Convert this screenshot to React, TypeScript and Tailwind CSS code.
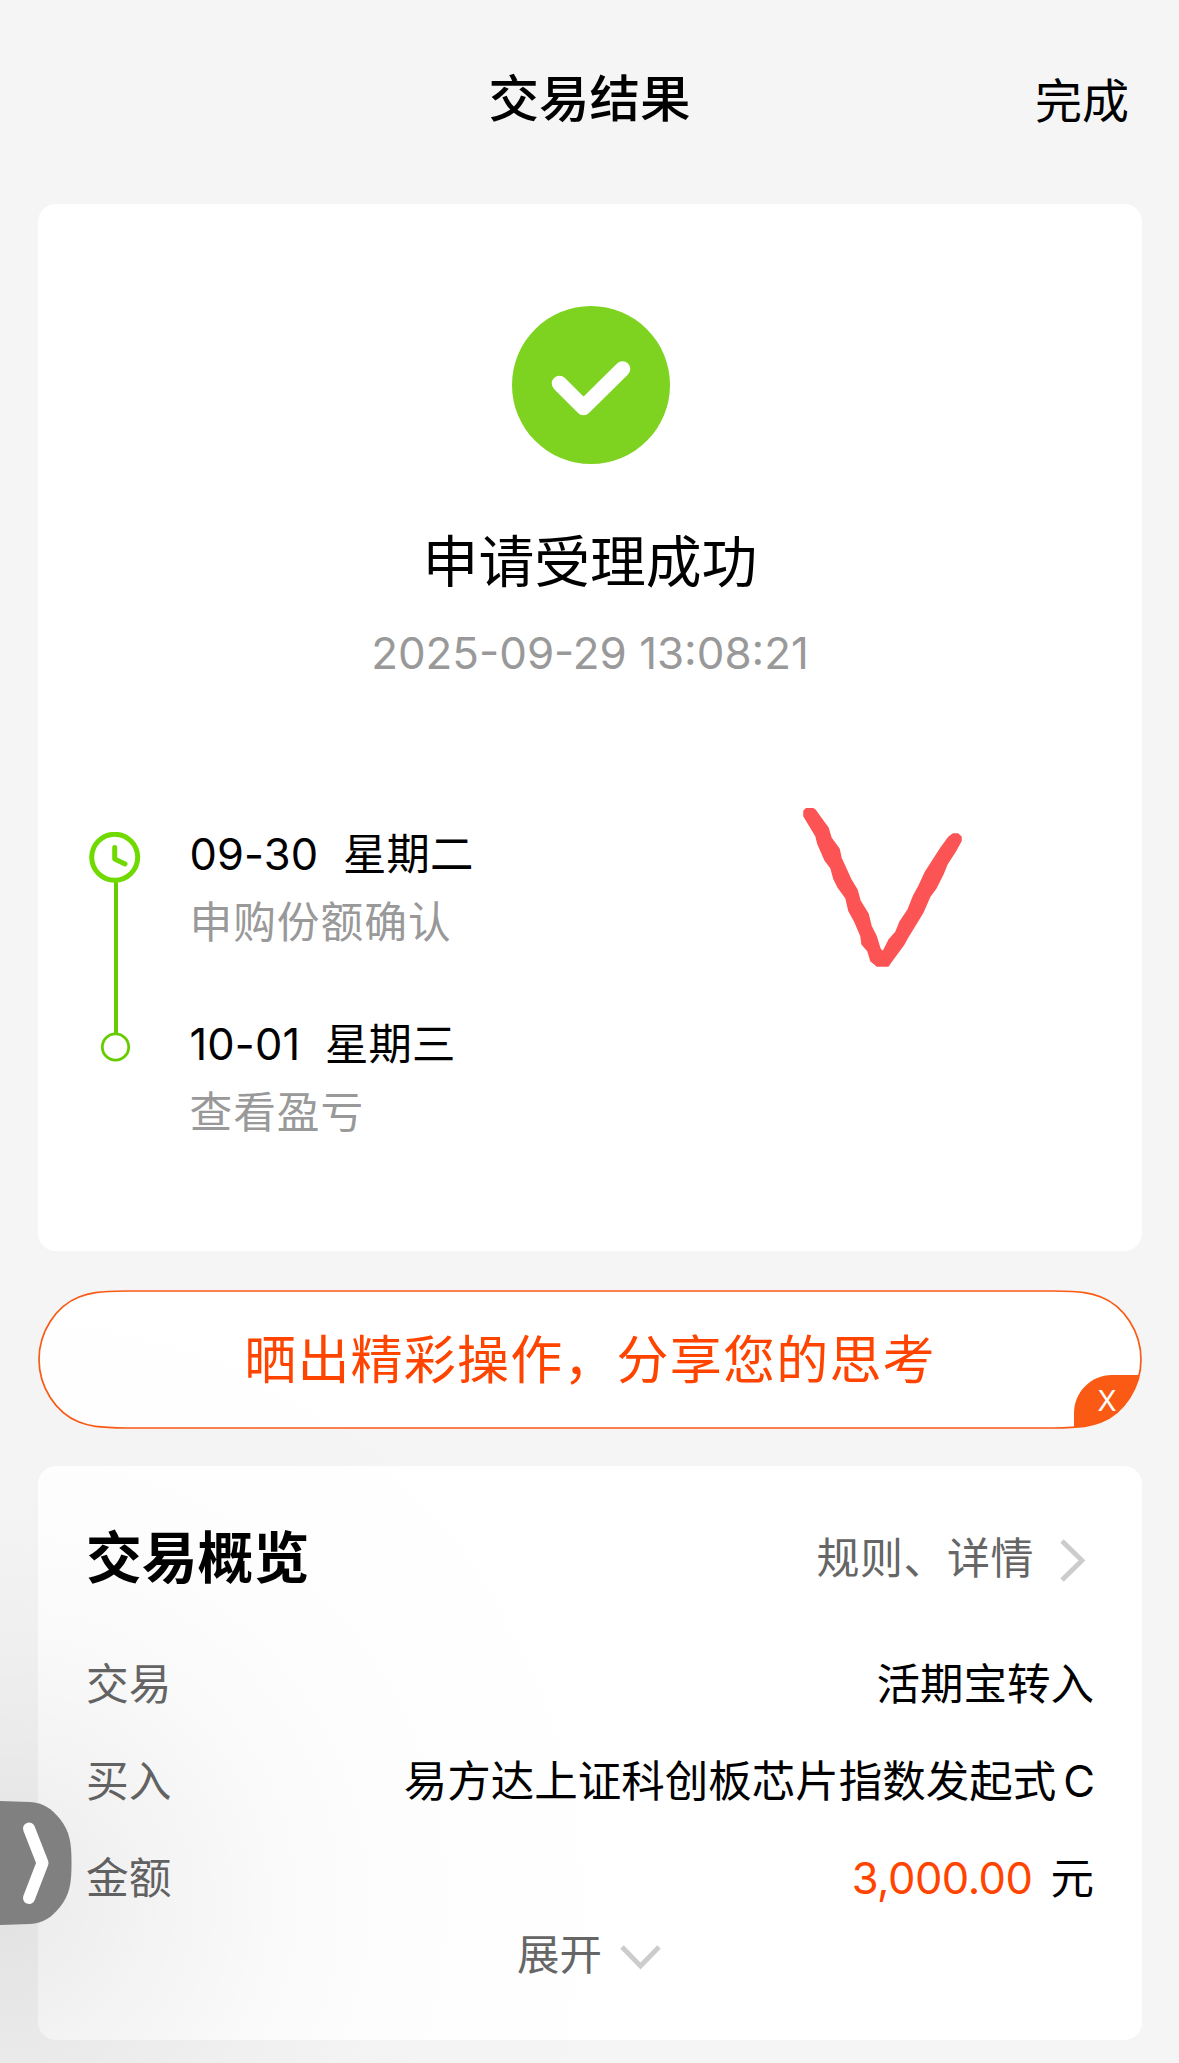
import { useState } from "react";

interface TimelineStep {
  date: string;
  weekday: string;
  label: string;
}

const STEPS: TimelineStep[] = [
  { date: "09-30", weekday: "星期二", label: "申购份额确认" },
  { date: "10-01", weekday: "星期三", label: "查看盈亏" },
];

const PILL_PATH =
  "M89 1H1015C1045 1.500 1053 3 1063 7C1086 16 1103 42 1103 69.500C1103 97 1086 123 1063 132C1053 136 1045 137.500 1015 138H89C59 137.500 51 136 41 132C18 123 1 97 1 69.500C1 42 18 16 41 7C51 3 59 1.500 89 1Z";

function SuccessIcon() {
  return (
    <svg className="ml-px" width="158" height="158" viewBox="0 0 158 158" fill="none">
      <circle cx="79" cy="79" r="79" fill="#7ed321" />
      <path
        d="M47.500 77.500L71.500 101.500L110.500 63"
        stroke="#fff"
        strokeWidth="15.500"
        strokeLinecap="round"
        strokeLinejoin="round"
      />
    </svg>
  );
}

/** Clock on top, hollow dot below, joined by a line. */
function TimelineRail() {
  return (
    <svg width="52" height="232" viewBox="0 0 52 232" fill="none">
      <path d="M27 50V202" stroke="#66cc00" strokeWidth="4" />
      <circle cx="25.700" cy="25.300" r="23" stroke="#6fd900" strokeWidth="5" />
      <path
        d="M25.700 15.500V27L36 32"
        stroke="#6fd900"
        strokeWidth="5"
        strokeLinecap="round"
        strokeLinejoin="round"
      />
      <circle cx="26.500" cy="215" r="13.200" stroke="#66cc00" strokeWidth="2.800" fill="#fff" />
    </svg>
  );
}

function PenMark() {
  return (
    <svg
      className="absolute left-[765px] top-[604px]"
      width="160"
      height="160"
      viewBox="803 808 160 160"
      fill="#fc5454"
      stroke="#fc5454"
      strokeWidth="1.500"
      strokeLinejoin="round"
    >
      <path d="M804 811L804 816L810 826L816 836L818 844L825 860L831 868L834 879L838 887L846 898L849 911L855 922L861 936L862 944L868 951L871 961L877 966L888 966L893 959L904 944L909 935L923 912L930 896L936 888L943 874L947 864L956 850L961 841L961 837L958 834L953 834L949 837L941 848L932 862L925 873L919 886L914 895L908 910L900 922L896 932L889 940L883 952L880 949L876 936L871 926L868 914L860 901L857 890L851 880L846 869L841 858L839 849L831 838L828 828L820 817L815 810L812 808L807 808Z" />
    </svg>
  );
}

export default function App() {
  const [showShare, setShowShare] = useState(true);

  return (
    <div className="relative flex h-[2063px] w-[1179px] flex-col overflow-hidden bg-[#f5f5f5] pr-[37px] pl-[38px] font-['Inter','Noto_Sans_CJK_SC',sans-serif] text-black">
      {/* Header */}
      <header className="grid h-[204px] grid-cols-3 items-start pt-[63px]">
        <span />
        <h1 className="pr-px text-center text-[50.500px] leading-[72px] font-medium">交易结果</h1>
        <button className="justify-self-end pt-[2px] pr-[13px] text-[47px] leading-[72px]">
          完成
        </button>
      </header>

      {/* Result */}
      <section className="relative h-[1047px] shrink-0 rounded-[18px] bg-white pt-[102px]">
        <div className="flex flex-col items-center">
          <SuccessIcon />
          <h2 className="mt-[58px] text-[55.800px] leading-[80px]">申请受理成功</h2>
          <p className="mt-[21px] text-[43.900px] leading-[60px] text-[#999]">2025-09-29 13:08:21</p>
        </div>

        <div className="mt-[149px] flex pl-[51px]">
          <TimelineRail />
          <div className="-mt-[8px] ml-[48.500px] flex flex-col gap-[56px]">
            {STEPS.map((step) => (
              <div key={step.date}>
                <p className="text-[43.400px] leading-[60px] tracking-[0.150px] whitespace-pre">
                  {step.date}
                  {"  "}
                  {step.weekday}
                </p>
                <p className="mt-[4px] text-[42.700px] leading-[70px] tracking-[1px] text-[#999]">
                  {step.label}
                </p>
              </div>
            ))}
          </div>
        </div>

        <PenMark />
      </section>

      {/* Share banner */}
      {showShare && (
        <div className="relative mt-[39px] flex h-[139px] shrink-0 items-center justify-center">
          <svg className="absolute inset-0" width="1104" height="139" viewBox="0 0 1104 139" fill="none">
            <clipPath id="pill">
              <path d={PILL_PATH} />
            </clipPath>
            <path d={PILL_PATH} fill="#fff" />
            <path
              d="M1036 139V123C1036 102 1053 85 1074 85H1104V139Z"
              fill="#fa5a14"
              clipPath="url(#pill)"
            />
            <path d={PILL_PATH} stroke="#fa5a14" strokeWidth="1.700" />
          </svg>
          <span className="relative pt-[2px] text-[52px] leading-[72px] tracking-[1.200px] text-[#ff4400]">
            晒出精彩操作，分享您的思考
          </span>
          <button
            onClick={() => setShowShare(false)}
            className="absolute right-0 bottom-0 h-[54px] w-[68px] pr-[2px] pb-[2px] text-[28px] leading-[52px] text-white"
          >
            X
          </button>
        </div>
      )}

      {/* Overview */}
      <section className="mt-[37px] h-[574px] shrink-0 rounded-[18px] bg-white px-[48px] pt-[52px]">
        <div className="flex items-center justify-between">
          <h3 className="text-[55.800px] leading-[80px] font-bold">交易概览</h3>
          <button className="flex items-center pr-[7px] text-[43px] leading-[80px] tracking-[0.500px] text-[#666]">
            规则、详情
            <svg className="mt-[3px] ml-[25px]" width="28" height="44" viewBox="0 0 28 44" fill="none">
              <path d="M3 3L23 22.500L3 42" stroke="#ccc" strokeWidth="4.800" />
            </svg>
          </button>
        </div>

        <dl className="mt-[38px] text-[43.500px] leading-[97px]">
          <div className="flex justify-between">
            <dt className="text-[42.700px] text-[#666]">交易</dt>
            <dd>活期宝转入</dd>
          </div>
          <div className="flex justify-between">
            <dt className="text-[42.700px] text-[#666]">买入</dt>
            <dd className="-mr-px">
              易方达上证科创板芯片指数发起式<span className="ml-[7px]">C</span>
            </dd>
          </div>
          <div className="flex justify-between">
            <dt className="text-[42.700px] text-[#666]">金额</dt>
            <dd>
              <span className="mr-[18px] tracking-[-0.500px] text-[#ff4400]">3,000.00</span>元
            </dd>
          </div>
        </dl>

        <button className="mx-auto flex items-center pr-[2px] text-[42.500px] leading-[56px] text-[#666]">
          展开
          <svg className="mt-[4px] ml-[18px]" width="41" height="26" viewBox="0 0 41 26" fill="none">
            <path d="M2 3L20.500 22L39 3" stroke="#ccc" strokeWidth="4.800" />
          </svg>
        </button>
      </section>

      {/* Soft shadow spreading from the drawer handle */}
      <div className="pointer-events-none absolute top-[1203px] left-0 h-[860px] w-[660px] bg-[radial-gradient(circle_660px_at_0px_700px,rgba(0,0,0,0.077)_0%,rgba(0,0,0,0.064)_12%,rgba(0,0,0,0.043)_25%,rgba(0,0,0,0.023)_40%,rgba(0,0,0,0.009)_58%,rgba(0,0,0,0.003)_78%,transparent_100%)]" />
      <button className="absolute top-[1801px] left-0 h-[124px] w-[72px]">
        <svg width="72" height="124" viewBox="0 0 72 124" fill="none">
          <path
            d="M0 0L30 1C43 1.500 52 8 60 18C70 31 71.500 42 71.500 62C71.500 82 70 93 60 106C52 116 43 122.500 30 123L0 124Z"
            fill="#808080"
          />
          <path
            d="M29 27.500L42.500 62L29 97"
            stroke="#fff"
            strokeWidth="12"
            strokeLinecap="round"
            strokeLinejoin="round"
          />
        </svg>
      </button>
    </div>
  );
}
